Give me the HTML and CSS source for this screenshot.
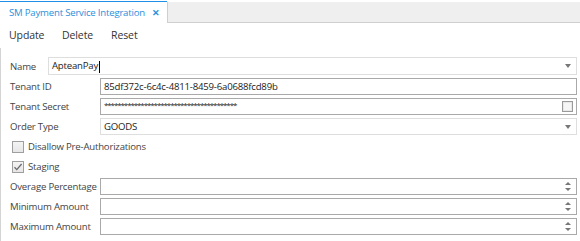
FILE: index.html
```html
<!DOCTYPE html>
<html lang="en">
<head>
    <meta charset="UTF-8">
    <title>SM Payment Service Integration</title>
    <link rel="stylesheet" href="styles.css">
</head>
<body>
    <div id="wrap">
        <div class="tabs">
            <div class="tab">
                <span class="tab-title">SM Payment Service Integration</span>
                <span class="tab-close">&#x2715;</span>
            </div>
            <div class="tab-rest"></div>
        </div>
        <div class="toolbar">
            <span class="tool">Update</span>
            <span class="tool">Delete</span>
            <span class="tool">Reset</span>
        </div>
        <div class="form">
            <div class="row row-name">
                <label class="lbl lbl-short">Name</label>
                <div class="field combo">
                    <span class="val">ApteanPay<span class="caret"></span></span>
                    <span class="drop"></span>
                </div>
            </div>
            <div class="row">
                <label class="lbl">Tenant ID</label>
                <div class="field text">
                    <span class="val">85df372c-6c4c-4811-8459-6a0688fcd89b</span>
                </div>
            </div>
            <div class="row">
                <label class="lbl">Tenant Secret</label>
                <div class="field text">
                    <span class="val secret">****************************************</span>
                    <span class="mini-box"></span>
                </div>
            </div>
            <div class="row">
                <label class="lbl">Order Type</label>
                <div class="field combo">
                    <span class="val">GOODS</span>
                    <span class="drop"></span>
                </div>
            </div>
            <div class="row check-row">
                <span class="check"></span>
                <span class="check-lbl">Disallow Pre-Authorizations</span>
            </div>
            <div class="row check-row">
                <span class="check checked">
                    <svg width="10" height="10" viewBox="0 0 10 10"><path d="M1.5 5.2 L3.8 7.6 L8.6 2" fill="none" stroke="#6a6a6a" stroke-width="1.3"/></svg>
                </span>
                <span class="check-lbl">Staging</span>
            </div>
            <div class="row">
                <label class="lbl">Overage Percentage</label>
                <div class="field text">
                    <span class="val"></span>
                    <span class="spin"><i class="up"></i><i class="down"></i></span>
                </div>
            </div>
            <div class="row">
                <label class="lbl">Minimum Amount</label>
                <div class="field text">
                    <span class="val"></span>
                    <span class="spin"><i class="up"></i><i class="down"></i></span>
                </div>
            </div>
            <div class="row">
                <label class="lbl">Maximum Amount</label>
                <div class="field text">
                    <span class="val"></span>
                    <span class="spin"><i class="up"></i><i class="down"></i></span>
                </div>
            </div>
        </div>
    </div>
</body>
</html>
```

FILE: styles.css
```css
*{margin:0;padding:0;box-sizing:border-box;}
html,body{width:100%;height:100%;background:#fff;}
body{font-family:"Open Sans","Liberation Sans",sans-serif;font-size:9.6px;letter-spacing:-0.2px;color:#3a3a3a;}
#wrap{width:100%;height:100%;}

.tabs{display:flex;height:22px;padding-top:1px;}
.tab{
    width:167px;
    height:21px;
    background:#fff;
    border-top:1px solid #1e90e8;
    display:flex;
    align-items:center;
    padding-left:9px;
}
.tab-title{color:#2a8fdc;font-size:9.6px;letter-spacing:-0.2px;width:143px;white-space:nowrap;overflow:hidden;}
.tab-close{color:#2a8fdc;font-size:9px;font-weight:bold;}
.tab-rest{
    flex:1;
    height:21px;
    margin-top:1px;
    background:#efefef;
    border-left:1px solid #cfcfcf;
    border-bottom:1px solid #cfcfcf;
}

.toolbar{height:26px;display:flex;align-items:center;padding-left:9px;}
.tool{font-size:10.5px;letter-spacing:-0.1px;color:#333;}
.tool:nth-child(1){width:53px;}
.tool:nth-child(2){width:49px;}

.form{
    border-left:1px solid #d4d4d4;
    padding:9px 3px 8px 0;
    display:flex;
    flex-direction:column;
    gap:3px;
}
.row{display:flex;align-items:center;height:17px;}
.row-name{height:18px;}
.lbl{width:99px;padding-left:9px;white-space:nowrap;color:#444;}
.lbl-short{width:47px;}

.field{
    flex:1;
    height:100%;
    display:flex;
    align-items:center;
    padding:0 3px;
    background:#fff;
}
.field.text{border:1px solid #a9a9a9;}
.field.combo{border:1px solid #dedede;}
.val{flex:1;white-space:nowrap;color:#222;}
.secret{font-size:8px;letter-spacing:-1.1px;position:relative;top:-2px;}
.caret{display:inline-block;width:1px;height:12px;background:#000;vertical-align:middle;margin-left:1px;}

.drop{
    width:0;height:0;
    border-left:3px solid transparent;
    border-right:3px solid transparent;
    border-top:4px solid #777;
    margin-right:2px;
}
.mini-box{
    width:11px;height:11px;
    border:1px solid #9a9a9a;
    box-shadow:inset 0 0 0 1px #e8e8e8;
    background:#f6f6f6;
}
.spin{display:flex;flex-direction:column;gap:3px;margin-right:2px;}
.spin i{
    display:block;width:0;height:0;
    border-left:3px solid transparent;
    border-right:3px solid transparent;
}
.spin .up{border-bottom:3px solid #777;}
.spin .down{border-top:3px solid #777;}

.check-row{padding-left:11px;}
.check{
    width:12px;height:12px;
    border:1px solid #9f9f9f;
    background:linear-gradient(#f4f4f4,#e6e6e6);
    margin-right:4px;
    display:flex;
    align-items:center;
    justify-content:center;
}
.check-lbl{color:#444;}
```
